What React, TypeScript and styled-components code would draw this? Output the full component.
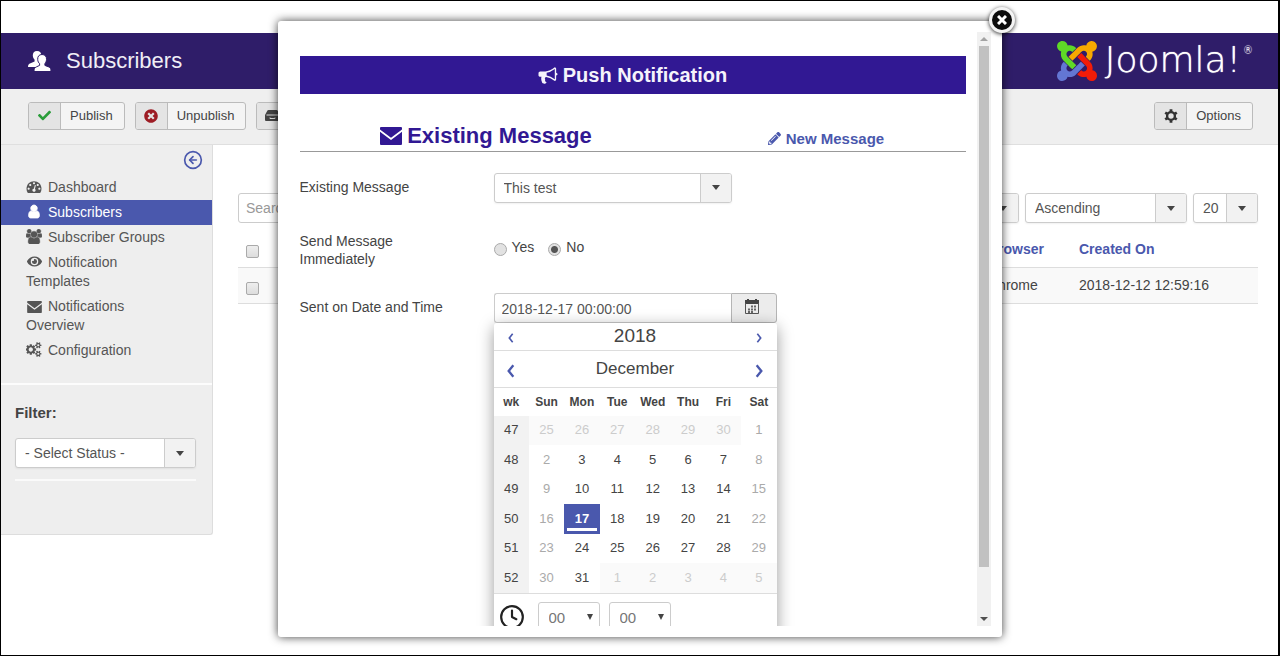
import React from "react";
import styled, { createGlobalStyle, css } from "styled-components";
import { FaCheck, FaEye, FaPencilAlt, FaTimesCircle } from "react-icons/fa";
import { CircleArrowLeft, Clock } from "lucide-react";

const accent = "#4a58ad";

const GlobalStyle = createGlobalStyle`
  * { box-sizing: border-box; }
  body {
    margin: 0;
    background: #fff;
    color: #555;
    font: 14px/18px "Liberation Sans", Arial, sans-serif;
  }
  button, input, select { font: inherit; color: inherit; margin: 0; }
  a { color: inherit; text-decoration: none; }
`;

const Page = styled.div`
  position: relative;
  min-height: 100vh;
  border: 1px solid #000;
  border-right-width: 2px;
  padding-top: 32px;
  overflow: hidden;
`;

const Header = styled.header`
  display: flex;
  align-items: center;
  justify-content: space-between;
  height: 56px;
  padding: 0 25px 0 27px;
  background: #2f1d69;
  color: #fff;
`;

const Brand = styled.div`
  display: flex;
  align-items: center;
  gap: 15px;
`;

const PageTitle = styled.h1`
  margin: 0;
  font-size: 22px;
  line-height: 28px;
  font-weight: normal;
  color: #f0eef6;
`;

const LogoLink = styled.a`
  display: flex;
  align-items: center;
  gap: 8px;
`;

const LogoText = styled.span`
  padding-bottom: 3px;
  font: 200 36px/40px "DejaVu Sans Light", "DejaVu Sans", sans-serif;
  color: #fff;
  text-shadow: 0 0 1px #fff;
  sup {
    font-size: 10px;
    line-height: 8px;
    vertical-align: 18px;
    padding-left: 2px;
  }
`;

const Toolbar = styled.div`
  display: flex;
  align-items: center;
  gap: 10px;
  height: 56px;
  padding: 0 25px 2px 27px;
  background: #efefef;
  border-bottom: 1px solid #dfdfdf;
`;

const ToolButton = styled.button<{ $end?: boolean }>`
  display: flex;
  align-items: stretch;
  height: 28px;
  padding: 0;
  margin-left: ${(p) => (p.$end ? "auto" : "0")};
  border: 1px solid #bbb;
  border-radius: 3px;
  background: #f4f4f4;
  font-size: 13px;
  line-height: 26px;
  color: #444;
  overflow: hidden;
`;

const ToolIcon = styled.span<{ $color: string }>`
  display: flex;
  align-items: center;
  justify-content: center;
  width: 32px;
  border-right: 1px solid #bbb;
  background: #e4e4e4;
  color: ${(p) => p.$color};
`;

const ToolLabel = styled.span`
  min-width: 60px;
  padding: 0 11px 0 9px;
`;

const Columns = styled.div`
  display: flex;
  align-items: flex-start;
`;

const Sidebar = styled.aside`
  flex: 0 0 211px;
  padding-bottom: 53px;
  background: #eee;
  border: solid #ddd;
  border-width: 0 1px 1px 0;
  border-radius: 0 0 3px 0;
`;

const Collapse = styled.button`
  display: flex;
  margin-left: auto;
  padding: 5px 9px 5px;
  border: 0;
  background: none;
  color: ${accent};
`;

const NavList = styled.ul`
  list-style: none;
  margin: 0;
  padding: 0 0 20px;
  border-bottom: 2px solid #fcfcfc;
`;

const NavLink = styled.a<{ $active?: boolean }>`
  display: block;
  padding: 3px 30px 3px 25px;
  line-height: 19px;
  ${(p) =>
    p.$active &&
    css`
      background: ${accent};
      color: #fff;
    `}
`;

const NavIcon = styled.span`
  display: inline-flex;
  justify-content: center;
  width: 16px;
  margin-right: 6px;
  vertical-align: -2px;
`;

const FilterBlock = styled.div`
  margin: 0 16px 0 14px;
  padding: 19px 0 11px;
  border-bottom: 2px solid #fafafa;
`;

const FilterLabel = styled.label`
  display: block;
  margin-bottom: 16px;
  font-size: 15px;
  font-weight: bold;
  color: #444;
`;

const ChosenBox = styled.div<{ $width: number }>`
  display: grid;
  grid-template-columns: 1fr 31px;
  width: ${(p) => p.$width}px;
  height: 30px;
  border: 1px solid #ccc;
  border-radius: 3px;
  background: #fff;
  box-shadow: 0 1px 2px rgba(0, 0, 0, 0.06);

  select {
    grid-area: 1 / 1 / 2 / 3;
    min-width: 0;
    padding: 0 9px;
    appearance: none;
    border: 0;
    background: transparent;
  }
`;

const ChosenArrow = styled.span`
  grid-area: 1 / 2;
  display: flex;
  align-items: center;
  justify-content: center;
  border-left: 1px solid #ccc;
  border-radius: 0 2px 2px 0;
  background: #f2f2f2;
  pointer-events: none;

  &::before {
    content: "";
    border: solid transparent;
    border-width: 5px 4px 0;
    border-top-color: #444;
  }
`;

const Main = styled.main`
  flex: 1;
  min-width: 0;
  padding: 48px 20px 0 25px;
`;

const FilterBar = styled.div`
  display: flex;
  gap: 6px;
  margin-bottom: 8px;
`;

const SearchInput = styled.input`
  width: 220px;
  height: 30px;
  margin-right: auto;
  padding: 0 7px;
  border: 1px solid #ccc;
  border-radius: 3px;
  &::placeholder { color: #999; }
`;

const SubscriberTable = styled.table`
  width: 100%;
  border-collapse: collapse;
  table-layout: fixed;
  th, td {
    height: 36px;
    padding: 0 8px;
    text-align: left;
    border-bottom: 1px solid #ddd;
  }
  th { color: ${accent}; }
  td { background: #f9f9f9; color: #444; }
`;

const Column = styled.col<{ $width?: number }>`
  width: ${(p) => (p.$width ? `${p.$width}px` : "auto")};
`;

const CheckBox = styled.input`
  display: block;
  width: 13px;
  height: 13px;
  margin: 6px 0 0;
  appearance: none;
  border: 1px solid #aaa;
  border-radius: 2px;
  background: linear-gradient(#eee, #ddd);
`;

const Modal = styled.section`
  position: absolute;
  top: 20px;
  bottom: 18px;
  left: 50%;
  width: 724px;
  margin-left: -362px;
  padding: 11px;
  border-radius: 3px;
  background: #fff;
  box-shadow: 0 0 10px rgba(0, 0, 0, 0.75);
`;

const CloseButton = styled.button`
  position: absolute;
  top: -14px;
  right: -13px;
  display: flex;
  align-items: center;
  justify-content: center;
  width: 26px;
  height: 26px;
  padding: 0;
  border: 3px solid #f4f4f4;
  border-radius: 50%;
  background: #0c0c0c;
  box-shadow: 0 1px 4px rgba(0, 0, 0, 0.8);
`;

const Viewport = styled.div`
  display: flex;
  height: 100%;
  overflow: hidden;
`;

const Pane = styled.div`
  flex: 1;
  min-width: 0;
  padding: 24px 11px 0;
  overflow: hidden;
`;

const ScrollTrack = styled.div`
  display: flex;
  flex-direction: column;
  flex: 0 0 14px;
  background: #f1f1f1;
`;

const ScrollArrow = styled.span<{ $down?: boolean }>`
  display: flex;
  align-items: center;
  justify-content: center;
  flex: 0 0 14px;
  &::before {
    content: "";
    border: solid transparent;
    ${(p) =>
      p.$down
        ? css`border-width: 4px 4px 0; border-top-color: #505050;`
        : css`border-width: 0 4px 4px; border-bottom-color: #a3a3a3;`}
  }
`;

const ScrollLane = styled.div`
  flex: 1;
  padding: 0 2px;
`;

const ScrollThumb = styled.div`
  height: 92%;
  background: #c1c1c1;
`;

const Banner = styled.h2`
  display: flex;
  align-items: center;
  justify-content: center;
  gap: 5px;
  height: 38px;
  margin: 0;
  background: #311893;
  color: #f5f3fb;
  font-size: 20px;
`;

const TabRow = styled.div`
  display: grid;
  grid-template-columns: 56fr 44fr;
  align-items: baseline;
  padding: 30px 0 0;
  border-bottom: 1px solid #999;
  line-height: 24px;
  font-weight: bold;
`;

const Tab = styled.a<{ $active?: boolean }>`
  display: flex;
  align-items: center;
  justify-content: center;
  gap: 5px;
  color: ${(p) => (p.$active ? "#311893" : accent)};
  font-size: ${(p) => (p.$active ? 22 : 15)}px;
  padding-left: ${(p) => (p.$active ? 0 : 14)}px;
`;

const Form = styled.form`
  display: grid;
  gap: 24px;
  padding-top: 21px;
`;

const Field = styled.div`
  display: grid;
  grid-template-columns: 194px 1fr;
  align-items: start;
`;

const FieldLabel = styled.label`
  max-width: 150px;
  padding: 5px 0 1px;
  color: #444;
`;

const RadioRow = styled.div`
  display: flex;
  gap: 14px;
  padding-top: 11px;
`;

const RadioLabel = styled.label`
  display: flex;
  gap: 5px;
  color: #444;
`;

const Radio = styled.input`
  width: 13px;
  height: 13px;
  margin: 5px 0 0;
  appearance: none;
  border: 1px solid #aaa;
  border-radius: 50%;
  background: #e2e2e2;
  &:checked {
    background: radial-gradient(#555 0 3px, #e2e2e2 4px);
  }
`;

const DateGroup = styled.div`
  width: 283px;
`;

const DateControls = styled.div`
  display: flex;
  height: 30px;
`;

const DateInput = styled.input`
  flex: 1;
  min-width: 0;
  padding: 2px 7px 0;
  border: 1px solid #ccc;
  border-right: 0;
  border-radius: 3px 0 0 3px;
`;

const DateButton = styled.button`
  display: flex;
  align-items: center;
  justify-content: center;
  width: 46px;
  padding: 0 4px 2px 0;
  border: 1px solid #b5b5b5;
  border-radius: 0 3px 3px 0;
  background: #ececec;
`;

const Calendar = styled.div`
  position: relative;
  background: #fff;
  border-radius: 3px;
  box-shadow: 0 4px 16px rgba(0, 0, 0, 0.4);
`;

const CalendarBar = styled.div<{ $month?: boolean }>`
  display: grid;
  grid-template-columns: 35px 1fr 35px;
  align-items: center;
  justify-items: center;
  height: ${(p) => (p.$month ? 37 : 28)}px;
  border-bottom: 1px solid #ddd;
  font-size: ${(p) => (p.$month ? 17 : 19)}px;
  color: #444;
`;

const StepButton = styled.button`
  display: flex;
  padding: 4px 0 0;
  border: 0;
  background: none;
  color: ${accent};
`;

const DayTable = styled.table`
  width: 100%;
  height: 206px;
  table-layout: fixed;
  border-spacing: 0;
  border-bottom: 1px solid #ddd;
  font-size: 13px;
  text-align: center;
  color: #444;
  th, td { padding: 0; height: 29px; }
  thead th { height: 28px; font-size: 12px; }
`;

const WeekNumber = styled.th`
  font-weight: normal;
  background: #f2f2f2;
`;

type DayKind = "day" | "weekend" | "other" | "selected";

const dayStyles = {
  day: css``,
  weekend: css`color: #aaa;`,
  other: css`color: #ccc; background: #fafafa;`,
  selected: css`
    color: #fff;
    font-weight: bold;
    background: linear-gradient(#fff, #fff) center bottom 3px / calc(100% - 6px) 3px no-repeat, ${accent};
  `,
};

const DayCell = styled.td<{ $kind: DayKind }>`
  ${(p) => dayStyles[p.$kind]}
`;

const TimeRow = styled.div`
  display: flex;
  align-items: center;
  gap: 9px;
  height: 46px;
  padding-left: 5px;
  color: #222;
`;

const TimeBox = styled.div<{ $first?: boolean }>`
  display: grid;
  align-items: center;
  width: 62px;
  height: 30px;
  margin-left: ${(p) => (p.$first ? 4 : 0)}px;
  select {
    grid-area: 1 / 1;
    height: 30px;
    padding: 2px 10px 0;
    appearance: none;
    border: 1px solid #ccc;
    border-radius: 3px;
    background: #fff;
    color: #777;
    font-size: 15px;
  }
  &::after {
    content: "";
    grid-area: 1 / 1;
    justify-self: end;
    margin-right: 7px;
    border: solid transparent;
    border-width: 6px 3px 0;
    border-top-color: #444;
    pointer-events: none;
  }
`;

const glyphs = {
  gauge: {
    box: "0 0 1792 1792",
    weight: 0,
    d: "M384 1152q0-53-37.5-90.5t-90.5-37.5-90.5 37.5-37.5 90.5 37.5 90.5 90.5 37.5 90.5-37.5 37.5-90.5zm192-448q0-53-37.5-90.5t-90.5-37.5-90.5 37.5-37.5 90.5 37.5 90.5 90.5 37.5 90.5-37.5 37.5-90.5zm428 481l101-382q6-26-7.5-48.5t-38.5-29.5-48 6.5-30 39.5l-101 382q-60 5-107 43.5t-63 98.5q-20 77 20 146t117 89 146-20 89-117q16-60-6-117t-72-91zm660-33q0-53-37.5-90.5t-90.5-37.5-90.5 37.5-37.5 90.5 37.5 90.5 90.5 37.5 90.5-37.5 37.5-90.5zm-640-640q0-53-37.5-90.5t-90.5-37.5-90.5 37.5-37.5 90.5 37.5 90.5 90.5 37.5 90.5-37.5 37.5-90.5zm448 192q0-53-37.5-90.5t-90.5-37.5-90.5 37.5-37.5 90.5 37.5 90.5 90.5 37.5 90.5-37.5 37.5-90.5zm320 448q0 261-141 483-19 29-54 29h-1402q-35 0-54-29-141-221-141-483 0-182 71-348t191-286 286-191 348-71 348 71 286 191 191 286 71 348z",
  },
  user: {
    box: "0 0 1792 1792",
    weight: 110,
    d: "M1536 1399q0 109-62.500 187t-150.500 78h-854q-88 0-150.500-78t-62.500-187q0-85 8.500-160.500t31.500-152 58.500-131 94-89 134.500-34.500q131 128 313 128t313-128q76 0 134.500 34.500t94 89 58.500 131 31.500 152 8.500 160.500zm-256-887q0 159-112.500 271.500t-271.500 112.500-271.500-112.500-112.500-271.500 112.500-271.500 271.500-112.500 271.500 112.500 112.500 271.500z",
  },
  users: {
    box: "0 0 1920 1792",
    weight: 40,
    d: "M593 896q-162 5-265 128h-134q-82 0-138-40.500t-56-118.500q0-353 124-353 6 0 43.500 21t97.500 42.500 119 21.500q67 0 133-23-5 37-5 66 0 139 81 256zm1071 637q0 120-73 189.500t-194 69.500h-874q-121 0-194-69.500t-73-189.500q0-53 3.500-103.500t14-109 26.500-108.500 43-97.500 62-81 85.500-53.500 111.500-20q10 0 43 21.500t73 48 107 48 135 21.500 135-21.500 107-48 73-48 43-21.500q61 0 111.500 20t85.500 53.500 62 81 43 97.500 26.500 108.500 14 109 3.500 103.500zm-1024-1277q0 106-75 181t-181 75-181-75-75-181 75-181 181-75 181 75 75 181zm704 384q0 159-112.500 271.500t-271.500 112.500-271.500-112.500-112.500-271.500 112.500-271.500 271.500-112.500 271.500 112.500 112.500 271.500zm576 225q0 78-56 118.500t-138 40.500h-134q-103-123-265-128 81-117 81-256 0-29-5-66 66 23 133 23 59 0 119-21.500t97.500-42.500 43.500-21q124 0 124 353zm-128-609q0 106-75 181t-181 75-181-75-75-181 75-181 181-75 181 75 75 181z",
  },
  cogs: {
    box: "0 0 1920 1792",
    weight: 0,
    d: "M832 896q0-106-75-181t-181-75-181 75-75 181 75 181 181 75 181-75 75-181zm768 512q0-52-38-90t-90-38-90 38-38 90q0 53 37.500 90.500t90.500 37.500 90.500-37.500 37.500-90.500zm0-1024q0-52-38-90t-90-38-90 38-38 90q0 53 37.500 90.500t90.500 37.500 90.500-37.500 37.500-90.500zm-384 421v185q0 10-7 19.500t-16 10.500l-155 24q-11 35-32 76 34 48 90 115 7 11 7 20 0 12-7 19-23 30-82.500 89.500t-78.500 59.500q-11 0-21-7l-115-90q-37 19-77 31-11 108-23 155-7 24-30 24h-186q-11 0-20-7.500t-10-17.500l-23-153q-34-10-75-31l-118 89q-7 7-20 7-11 0-21-8-144-133-144-160 0-9 7-19 10-14 41-53t47-61q-23-44-35-82l-152-24q-10-1-17-9.500t-7-19.500v-185q0-10 7-19.500t16-10.500l155-24q11-35 32-76-34-48-90-115-7-11-7-20 0-12 7-20 22-30 82-89t79-59q11 0 21 7l115 90q34-18 77-32 11-108 23-154 7-24 30-24h186q11 0 20 7.500t10 17.500l23 153q34 10 75 31l118-89q8-7 20-7 11 0 21 8 144 133 144 160 0 8-7 19-12 16-42 54t-45 60q23 48 34 82l152 23q10 2 17 10.500t7 19.500zm640 533v140q0 16-149 31-12 27-30 52 51 113 51 138 0 4-4 7-122 71-124 71-8 0-46-47t-52-68q-20 2-30 2t-30-2q-14 21-52 68t-46 47q-2 0-124-71-4-3-4-7 0-25 51-138-18-25-30-52-149-15-149-31v-140q0-16 149-31 13-29 30-52-51-113-51-138 0-4 4-7 4-2 35-20t59-34 30-16q8 0 46 46.500t52 67.500q20-2 30-2t30 2q51-71 92-112l6-2q4 0 124 70 4 3 4 7 0 25-51 138 17 23 30 52 149 15 149 31zm0-1024v140q0 16-149 31-12 27-30 52 51 113 51 138 0 4-4 7-122 71-124 71-8 0-46-47t-52-68q-20 2-30 2t-30-2q-14 21-52 68t-46 47q-2 0-124-71-4-3-4-7 0-25 51-138-18-25-30-52-149-15-149-31v-140q0-16 149-31 13-29 30-52-51-113-51-138 0-4 4-7 4-2 35-20t59-34 30-16q8 0 46 46.500t52 67.500q20-2 30-2t30 2q51-71 92-112l6-2q4 0 124 70 4 3 4 7 0 25-51 138 17 23 30 52 149 15 149 31z",
  },
  bullhorn: {
    box: "0 0 1792 1792",
    weight: 0,
    d: "M1664 640q53 0 90.500 37.500t37.500 90.500-37.500 90.500-90.500 37.500v384q0 52-38 90t-90 38q-417-347-812-380-58 19-91 66t-31 100.500 40 92.500q-20 33-23 65.500t6 58 33.500 55 48 50 61.500 50.500q-29 58-111.500 83t-168.500 11.500-132-55.500q-7-23-29.500-87.500t-32-94.500-23-89-15-101 3.500-98.500 22-110.500h-122q-66 0-113-47t-47-113v-192q0-66 47-113t113-47h480q435 0 896-384 52 0 90 38t38 90v384zm-128 604v-954q-394 302-768 343v270q377 42 768 341z",
  },
};

function Glyph({ name, size }: { name: keyof typeof glyphs; size: number }) {
  const { box, weight, d } = glyphs[name];
  return (
    <svg height={size} width={size + 1} viewBox={box} fill="currentColor" stroke="currentColor" strokeWidth={weight} aria-hidden="true">
      <path d={d} />
    </svg>
  );
}

function Envelope({ width }: { width: number }) {
  return (
    <svg width={width} height={Math.round(width * 0.8)} viewBox="0 0 22 18" aria-hidden="true">
      <path fill="currentColor" d="M1 0h20q1 0 1 1v1.500l-11 8.200L0 2.500V1q0-1 1-1zM0 4.800l11 8.200 11-8.200V17q0 1-1 1H1q-1 0-1-1z" />
    </svg>
  );
}

function PeopleIcon() {
  return (
    <svg width="23" height="21" viewBox="0 0 23 21" fill="#fff" aria-hidden="true">
      <path d="M9 0c2.900 0 4.500 1.900 4.300 4.600-.1 1.800-.7 3.100-1.500 4v2.200l4 1.700V16H0c0-2.400.8-3.200 2.500-3.800L6.600 10.600V8.700C5.600 7.800 4.900 6.400 4.800 4.600 4.700 1.900 6.200 0 9 0z" />
      <path
        stroke="#2f1d69"
        strokeWidth="1"
        d="M14 3.500c3.100 0 4.700 2 4.500 5-.1 1.900-.8 3.300-1.600 4.200v1.700l3.800 1.500c1.700.7 2.300 1.700 2.300 4.600H6c0-2.900.7-3.900 2.400-4.600l3.200-1.500v-1.700c-1-.9-1.800-2.300-1.900-4.200-.2-3 1.200-5 4.300-5z"
      />
    </svg>
  );
}

function JoomlaMark() {
  return (
    <svg width="40" height="40" viewBox="0 32 448 448" aria-hidden="true">
      <path fill="#5fd927" d="M.6 92.100C.6 58.800 27.400 32 60.400 32c30 0 54.500 21.900 59.200 50.200 32.600-7.600 67.100.6 96.500 30l-44.300 44.300c-20.500-20.500-42.600-16.300-55.400-3.500-14.300 14.300-14.300 37.900 0 52.200l99.500 99.500-44 44.300c-87.700-87.200-49.700-49.700-99.800-99.700-26.800-26.500-35-64.800-24.800-98.900C20.400 144.600.6 120.700.6 92.100z" />
      <path fill="#f7a900" d="M130.100 208.500l44.300 44.300c10-10 89.700-89.700 99.700-99.800 14.300-14.300 37.600-14.300 51.900 0 12.800 12.800 17 35-3.500 55.400l44 44.300c31.200-31.200 38.500-67.600 28.900-101.200 29.200-4.100 51.900-29.200 51.900-59.500 0-33.200-26.800-60.100-59.800-60.100-30.300 0-55.400 22.500-59.500 51.600-33.800-9.900-71.700-1.500-98.300 25.100-18.300 19.100-71.100 71.500-99.600 99.900z" />
      <path fill="#f21c08" d="M396.400 360.700c8.200-32.700-.9-68.500-26.300-93.900-11.800-12.200 5 4.700-99.500-99.700l-44.300 44.300 99.700 99.700c14.300 14.300 14.300 37.600 0 51.900-12.800 12.800-35 17-55.400-3.500l-44 44.300c27.600 30.200 68 38.800 102.700 28 5.500 27.400 29.700 48.100 58.900 48.100 33 0 59.800-26.800 59.800-60.100 0-30.200-22.500-55-51.600-59.100z" />
      <path fill="#6376d3" d="M312.100 307.600l-44-44.300c-87 86.400-50.400 50.400-99.700 99.800-14.300 14.300-37.600 14.300-51.900 0-13.100-13.400-16.900-35.300 3.200-55.400l-44-44.300c-30.200 30.200-38 65.200-29.500 98.300-26.700 6-46.200 29.900-46.200 58.200C0 453.200 26.800 480 59.800 480c28.600 0 52.500-19.800 58.600-46.700 32.700 8.200 68.500-.6 94.200-26 32.100-32 12.200-12.400 99.500-99.700z" />
    </svg>
  );
}

function DrawerIcon() {
  return (
    <svg width="15" height="11" viewBox="0 0 15 11" aria-hidden="true">
      <path fill="#444" d="M3.500 0h8q.8 0 1.200.7L15 5v5q0 1-1 1H1q-1 0-1-1V5L2.300.7Q2.700 0 3.500 0z" />
      <path stroke="#ddd" fill="none" d="M1.500 5h12M5 7.500v1h5v-1" />
    </svg>
  );
}

function GearIcon() {
  return (
    <svg width="14" height="14" viewBox="-7 -7 14 14" fill="none" stroke="currentColor" aria-hidden="true">
      <circle r="3.900" strokeWidth="2.400" />
      {[0, 60, 120].map((turn) => (
        <path key={turn} transform={`rotate(${turn})`} strokeWidth="2.800" d="M0-6.700v2.500M0 4.200v2.500" />
      ))}
    </svg>
  );
}

function CalendarIcon() {
  return (
    <svg width="14" height="15" viewBox="0 0 14 15" aria-hidden="true">
      <path fill="#444" d="M0 1h2V0h2v1h6V0h2v1h2v4H0z" />
      <path stroke="#555" fill="none" d="M.5 4v10.500h13V4" />
      <path stroke="#666" strokeWidth="2" strokeDasharray="2 1" d="M6 7.500h6M3 10.500h9M3 13h6" />
    </svg>
  );
}

function Chevron({ size, left }: { size: number; left?: boolean }) {
  return (
    <svg width={size} height={size} viewBox="0 0 12 12" fill="none" stroke="currentColor" strokeWidth="2" aria-hidden="true">
      <path d={left ? "M8 1L4 6l4 5" : "M4 1l4 5-4 5"} />
    </svg>
  );
}

function Chosen({ id, label, width, value }: { id?: string; label?: string; width: number; value: string }) {
  return (
    <ChosenBox $width={width}>
      <select id={id} aria-label={label} defaultValue={value}>
        <option>{value}</option>
      </select>
      <ChosenArrow />
    </ChosenBox>
  );
}

const navItems = [
  { label: "Dashboard", icon: <Glyph name="gauge" size={15} /> },
  { label: "Subscribers", icon: <Glyph name="user" size={15} />, active: true },
  { label: "Subscriber Groups", icon: <Glyph name="users" size={15} /> },
  { label: "Notification Templates", icon: <FaEye size={15} /> },
  { label: "Notifications Overview", icon: <Envelope width={15} /> },
  { label: "Configuration", icon: <Glyph name="cogs" size={15} /> },
];

const weekdays = ["wk", "Sun", "Mon", "Tue", "Wed", "Thu", "Fri", "Sat"];

const weeks = [
  { wk: 47, days: [25, 26, 27, 28, 29, 30, 1] },
  { wk: 48, days: [2, 3, 4, 5, 6, 7, 8] },
  { wk: 49, days: [9, 10, 11, 12, 13, 14, 15] },
  { wk: 50, days: [16, 17, 18, 19, 20, 21, 22] },
  { wk: 51, days: [23, 24, 25, 26, 27, 28, 29] },
  { wk: 52, days: [30, 31, 1, 2, 3, 4, 5] },
];

function dayKind(wk: number, day: number, index: number): DayKind {
  if ((wk === 47 && day > 20) || (wk === 52 && day < 10)) return "other";
  if (day === 17) return "selected";
  return index === 0 || index === 6 ? "weekend" : "day";
}

function DatePicker() {
  return (
    <Calendar>
      <CalendarBar>
        <StepButton type="button" aria-label="Previous year"><Chevron size={10} left /></StepButton>
        <span>2018</span>
        <StepButton type="button" aria-label="Next year"><Chevron size={10} /></StepButton>
      </CalendarBar>
      <CalendarBar $month>
        <StepButton type="button" aria-label="Previous month"><Chevron size={14} left /></StepButton>
        <span>December</span>
        <StepButton type="button" aria-label="Next month"><Chevron size={14} /></StepButton>
      </CalendarBar>
      <DayTable>
        <thead>
          <tr>{weekdays.map((d) => <th key={d} scope="col">{d}</th>)}</tr>
        </thead>
        <tbody>
          {weeks.map(({ wk, days }) => (
            <tr key={wk}>
              <WeekNumber scope="row">{wk}</WeekNumber>
              {days.map((day, i) => (
                <DayCell key={i} $kind={dayKind(wk, day, i)}>{day}</DayCell>
              ))}
            </tr>
          ))}
        </tbody>
      </DayTable>
      <TimeRow>
        <Clock size={26} strokeWidth={2} />
        <TimeBox $first><select aria-label="Hour"><option>00</option></select></TimeBox>
        <TimeBox><select aria-label="Minute"><option>00</option></select></TimeBox>
      </TimeRow>
    </Calendar>
  );
}

function NotificationModal() {
  return (
    <Modal role="dialog" aria-label="Push Notification">
      <Viewport>
        <Pane>
          <Banner><Glyph name="bullhorn" size={19} />Push Notification</Banner>
          <TabRow>
            <Tab href="#existing" $active><Envelope width={22} />Existing Message</Tab>
            <Tab href="#new"><FaPencilAlt size={13} />New Message</Tab>
          </TabRow>
          <Form>
            <Field>
              <FieldLabel htmlFor="message">Existing Message</FieldLabel>
              <Chosen id="message" width={238} value="This test" />
            </Field>
            <Field role="radiogroup" aria-labelledby="send-now">
              <FieldLabel as="span" id="send-now">Send Message Immediately</FieldLabel>
              <RadioRow>
                <RadioLabel><Radio type="radio" name="now" />Yes</RadioLabel>
                <RadioLabel><Radio type="radio" name="now" defaultChecked />No</RadioLabel>
              </RadioRow>
            </Field>
            <Field>
              <FieldLabel htmlFor="sent-on">Sent on Date and Time</FieldLabel>
              <DateGroup>
                <DateControls>
                  <DateInput id="sent-on" defaultValue="2018-12-17 00:00:00" />
                  <DateButton type="button" aria-label="Open the calendar"><CalendarIcon /></DateButton>
                </DateControls>
                <DatePicker />
              </DateGroup>
            </Field>
          </Form>
        </Pane>
        <ScrollTrack>
          <ScrollArrow />
          <ScrollLane><ScrollThumb /></ScrollLane>
          <ScrollArrow $down />
        </ScrollTrack>
      </Viewport>
      <CloseButton type="button" aria-label="Close">
        <svg width="10" height="10" viewBox="0 0 10 10" stroke="#fff" strokeWidth="3" aria-hidden="true">
          <path d="M1 1l8 8M9 1L1 9" />
        </svg>
      </CloseButton>
    </Modal>
  );
}

export default function App() {
  return (
    <Page>
      <GlobalStyle />
      <Header>
        <Brand><PeopleIcon /><PageTitle>Subscribers</PageTitle></Brand>
        <LogoLink href="#home"><JoomlaMark /><LogoText>Joomla!<sup>®</sup></LogoText></LogoLink>
      </Header>
      <Toolbar>
        <ToolButton type="button">
          <ToolIcon $color="#2a9d3a"><FaCheck size={13} /></ToolIcon><ToolLabel>Publish</ToolLabel>
        </ToolButton>
        <ToolButton type="button">
          <ToolIcon $color="#9d1c24"><FaTimesCircle size={14} /></ToolIcon><ToolLabel>Unpublish</ToolLabel>
        </ToolButton>
        <ToolButton type="button" aria-label="Archive">
          <ToolIcon $color="#444"><DrawerIcon /></ToolIcon><ToolLabel />
        </ToolButton>
        <ToolButton type="button" $end>
          <ToolIcon $color="#333"><GearIcon /></ToolIcon><ToolLabel>Options</ToolLabel>
        </ToolButton>
      </Toolbar>
      <Columns>
        <Sidebar>
          <Collapse type="button" aria-label="Collapse the sidebar"><CircleArrowLeft size={20} strokeWidth={2} /></Collapse>
          <NavList>
            {navItems.map((item) => (
              <li key={item.label}>
                <NavLink href="#" $active={item.active}><NavIcon>{item.icon}</NavIcon>{item.label}</NavLink>
              </li>
            ))}
          </NavList>
          <FilterBlock>
            <FilterLabel htmlFor="status">Filter:</FilterLabel>
            <Chosen id="status" width={181} value="- Select Status -" />
          </FilterBlock>
        </Sidebar>
        <Main>
          <FilterBar>
            <SearchInput type="text" placeholder="Search" aria-label="Search" />
            <Chosen label="Sort by" width={120} value="" />
            <Chosen label="Direction" width={162} value="Ascending" />
            <Chosen label="Rows shown" width={65} value="20" />
          </FilterBar>
          <SubscriberTable>
            <colgroup><Column $width={40} /><Column /><Column $width={91} /><Column $width={187} /></colgroup>
            <thead>
              <tr>
                <th><CheckBox type="checkbox" aria-label="Select all" /></th>
                <th /><th>Browser</th><th>Created On</th>
              </tr>
            </thead>
            <tbody>
              <tr>
                <td><CheckBox type="checkbox" aria-label="Select row" /></td>
                <td /><td>Chrome</td><td>2018-12-12 12:59:16</td>
              </tr>
            </tbody>
          </SubscriberTable>
        </Main>
      </Columns>
      <NotificationModal />
    </Page>
  );
}
